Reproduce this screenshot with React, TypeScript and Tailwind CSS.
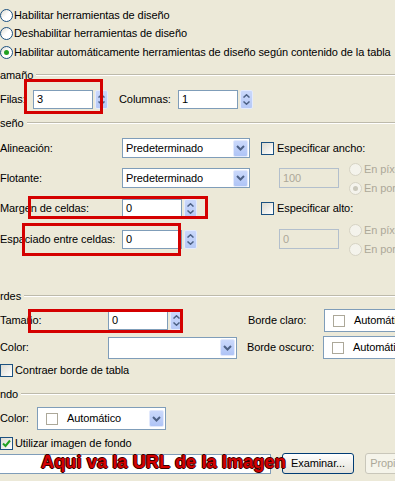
import React from "react";

const Radio = ({ checked = false, disabled = false }: { checked?: boolean; disabled?: boolean }) => (
  <span
    className={`flex items-center justify-center w-[13px] h-[13px] rounded-full border shrink-0 ${
      disabled ? "border-[#d6d3c4] bg-[#f4f3ec]" : "border-[#1c5180] bg-linear-to-br from-[#dcdad0] via-white to-white"
    }`}
  >
    {checked && <span className={`w-[5px] h-[5px] rounded-full ${disabled ? "bg-[#cac8bb]" : "bg-[#21a121]"}`} />}
  </span>
);

const Check = ({ checked = false }: { checked?: boolean }) => (
  <span className="flex items-center justify-center w-[13px] h-[13px] border border-[#1c5180] bg-linear-to-br from-[#dcdad0] to-white shrink-0">
    {checked && (
      <svg width="9" height="9" viewBox="0 0 9 9">
        <path d="M1 4.5 L3.5 7 L8 1.5" fill="none" stroke="#21a121" strokeWidth="2" />
      </svg>
    )}
  </span>
);

const SpinBtn = () => (
  <div className="w-[13px] h-[19px] flex flex-col items-center justify-center gap-[3px] bg-linear-to-b from-[#cad8fb] to-[#b6c9f6] border border-[#e4ebfd] rounded-[2px] shrink-0">
    <svg width="7" height="4" viewBox="0 0 7 4">
      <path d="M0.5 3.5 L3.5 0.8 L6.5 3.5" fill="none" stroke="#4d6185" strokeWidth="1.5" />
    </svg>
    <svg width="7" height="4" viewBox="0 0 7 4">
      <path d="M0.5 0.5 L3.5 3.2 L6.5 0.5" fill="none" stroke="#4d6185" strokeWidth="1.5" />
    </svg>
  </div>
);

const Spin = ({ value }: { value: string }) => (
  <div className="flex items-center gap-[2px] shrink-0">
    <div className="w-[60px] h-[19px] border border-[#7f9db9] bg-white flex items-center pl-[3px]">{value}</div>
    <SpinBtn />
  </div>
);

const DropBtn = () => (
  <span className="w-[15px] h-[17px] rounded-[2px] bg-linear-to-b from-[#cbd9fb] to-[#afc4f6] border border-[#e2e9fc] flex items-center justify-center shrink-0">
    <svg width="9" height="6" viewBox="0 0 9 6">
      <path d="M1 1 L4.5 4.5 L8 1" fill="none" stroke="#4d6185" strokeWidth="2" />
    </svg>
  </span>
);

const Section = ({ label, className = "" }: { label: string; className?: string }) => (
  <div className={`flex items-center h-[18px] ${className}`}>
    <span>{label}</span>
    <div className="flex-1 ml-[3px] h-[2px] border-t border-[#bdbaab] border-b border-b-white" />
  </div>
);

const ColorPick = ({ className = "" }: { className?: string }) => (
  <div className={`h-[23px] border border-[#7f9db9] bg-white flex items-center pl-[8px] pr-[1px] shrink-0 ${className}`}>
    <span className="w-[12px] h-[12px] border border-[#aca899] bg-white shrink-0" />
    <span className="ml-[9px] flex-1">Automático</span>
    <DropBtn />
  </div>
);

const RedBox = ({ className }: { className: string }) => (
  <div className={`absolute border-[3px] border-[#d40000] ${className}`} />
);

export default function App() {
  return (
    <div className="relative w-[395px] h-[481px] overflow-hidden bg-[#ece9d8] text-black text-[11px] leading-none tracking-[-0.09px] whitespace-nowrap font-['Liberation_Sans',Arial,sans-serif]">
      <div className="flex flex-col pt-[6px]">
        <div className="flex items-center h-[18px] gap-[1px]">
          <Radio />
          <span>Habilitar herramientas de diseño</span>
        </div>
        <div className="flex items-center h-[18px] gap-[1px]">
          <Radio />
          <span>Deshabilitar herramientas de diseño</span>
        </div>
        <div className="flex items-center h-[18px] mt-[1px] gap-[1px]">
          <Radio checked />
          <span>Habilitar automáticamente herramientas de diseño según contenido de la tabla</span>
        </div>

        <Section label="amaño" className="mt-[5px]" />

        <div className="flex items-center h-[19px] mt-[6px]">
          <span className="w-[33px]">Filas:</span>
          <Spin value="3" />
          <span className="ml-[11px] w-[59px]">Columnas:</span>
          <Spin value="1" />
        </div>

        <Section label="seño" className="mt-[5px]" />

        <div className="flex mt-[6px]">
          <div className="w-[261px] flex flex-col shrink-0">
            <div className="flex items-center h-[20px]">
              <span className="w-[122px]">Alineación:</span>
              <div className="w-[128px] h-[20px] border border-[#7f9db9] bg-white flex items-center pl-[3px] pr-[1px]">
                <span className="flex-1">Predeterminado</span>
                <DropBtn />
              </div>
            </div>
            <div className="flex items-center h-[20px] mt-[10px]">
              <span className="w-[122px]">Flotante:</span>
              <div className="w-[128px] h-[20px] border border-[#7f9db9] bg-white flex items-center pl-[3px] pr-[1px]">
                <span className="flex-1">Predeterminado</span>
                <DropBtn />
              </div>
            </div>
            <div className="flex items-center h-[19px] mt-[11px]">
              <span className="w-[122px]">Margen de celdas:</span>
              <Spin value="0" />
            </div>
            <div className="flex items-center h-[19px] mt-[12px]">
              <span className="w-[122px]">Espaciado entre celdas:</span>
              <Spin value="0" />
            </div>
          </div>

          <div className="flex flex-col">
            <div className="flex items-center h-[20px] gap-[3px]">
              <Check />
              <span>Especificar ancho:</span>
            </div>
            <div className="flex mt-[2px]">
              <div className="pl-[18px] pt-[8px]">
                <div className="w-[60px] h-[20px] border border-[#b3bfcc] flex items-center pl-[3px] text-[#aca899]">100</div>
              </div>
              <div className="flex flex-col ml-[10px] text-[#aca899]">
                <div className="flex items-center h-[19px] gap-[2px]">
                  <Radio disabled />
                  <span>En píxeles</span>
                </div>
                <div className="flex items-center h-[19px] gap-[2px]">
                  <Radio disabled checked />
                  <span>En porcentaje</span>
                </div>
              </div>
            </div>
            <div className="flex items-center h-[19px] mt-[1px] gap-[3px]">
              <Check />
              <span>Especificar alto:</span>
            </div>
            <div className="flex mt-[3px]">
              <div className="pl-[18px] pt-[8px]">
                <div className="w-[60px] h-[20px] border border-[#b3bfcc] flex items-center pl-[3px] text-[#aca899]">0</div>
              </div>
              <div className="flex flex-col ml-[10px] text-[#aca899]">
                <div className="flex items-center h-[19px] gap-[2px]">
                  <Radio disabled />
                  <span>En píxeles</span>
                </div>
                <div className="flex items-center h-[19px] gap-[2px]">
                  <Radio disabled />
                  <span>En porcentaje</span>
                </div>
              </div>
            </div>
          </div>
        </div>

        <Section label="rdes" className="mt-[28px]" />

        <div className="flex items-center h-[23px] mt-[4px]">
          <span className="w-[108px] shrink-0">Tamaño:</span>
          <Spin value="0" />
          <span className="ml-[65px] w-[76px] shrink-0">Borde claro:</span>
          <ColorPick className="w-[130px]" />
        </div>
        <div className="flex items-center h-[23px] mt-[4px]">
          <span className="w-[108px] shrink-0">Color:</span>
          <div className="w-[129px] h-[22px] border border-[#7f9db9] bg-white flex items-center justify-end pr-[1px] shrink-0">
            <DropBtn />
          </div>
          <span className="ml-[10px] w-[76px] shrink-0">Borde oscuro:</span>
          <ColorPick className="w-[130px]" />
        </div>
        <div className="flex items-center h-[14px] mt-[4px] gap-[2px]">
          <Check />
          <span>Contraer borde de tabla</span>
        </div>

        <Section label="ndo" className="mt-[8px]" />

        <div className="flex items-center h-[23px] mt-[4px]">
          <span className="w-[37px] shrink-0">Color:</span>
          <ColorPick className="w-[129px]" />
        </div>
        <div className="flex items-center h-[14px] mt-[6px] gap-[2px]">
          <Check checked />
          <span>Utilizar imagen de fondo</span>
        </div>
        <div className="flex items-center h-[21px] mt-[3px]">
          <div className="w-[271px] h-[20px] border border-[#7f9db9] border-l-0 bg-white shrink-0" />
          <div className="ml-[11px] w-[72px] h-[21px] rounded-[3px] border border-[#003c74] bg-linear-to-b from-white to-[#e4e2d9] flex items-center justify-center shrink-0">
            Examinar...
          </div>
          <div className="ml-[11px] w-[80px] h-[21px] rounded-[3px] border border-[#c9c7ba] bg-[#f5f4ea] text-[#aca899] flex items-center justify-center shrink-0">
            Propiedades...
          </div>
        </div>
      </div>

      <RedBox className="left-[24px] top-[79px] w-[79px] h-[35px]" />
      <RedBox className="left-[28px] top-[196px] w-[180px] h-[23px]" />
      <RedBox className="left-[22px] top-[223px] w-[159px] h-[33px]" />
      <RedBox className="left-[28px] top-[309px] w-[155px] h-[24px]" />

      <div className="absolute left-[41px] top-[452px] text-[18px] font-bold leading-[20px] tracking-[0.15px] text-[#d40000] [text-shadow:1px_0_#3a0000,-1px_0_#3a0000,0_1px_#3a0000,0_-1px_#3a0000]">
        Aqui va la URL de la Imagen
      </div>
    </div>
  );
}
